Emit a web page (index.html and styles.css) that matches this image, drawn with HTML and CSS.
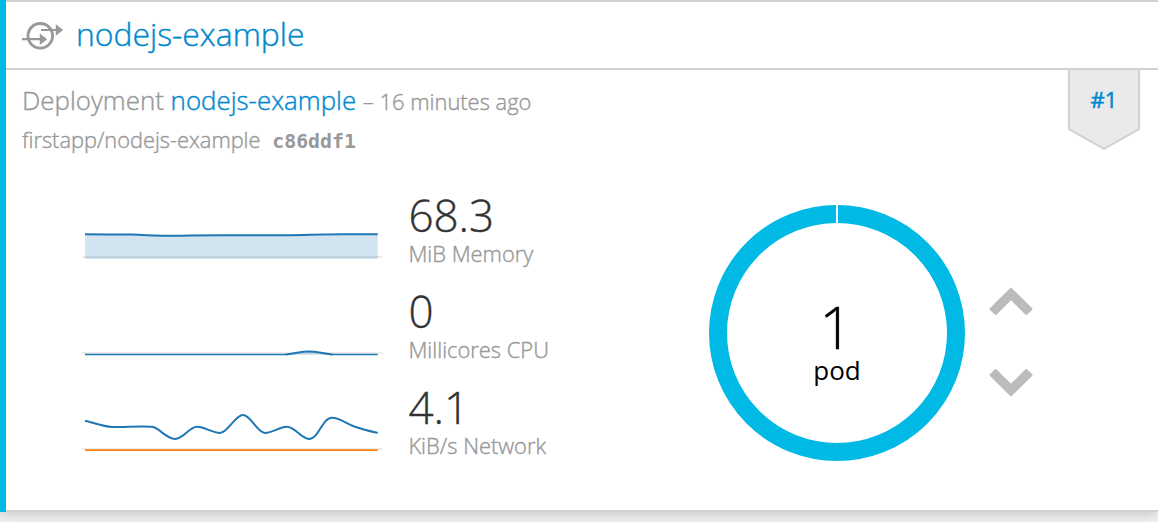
FILE: index.html
```html
<!DOCTYPE html>
<html lang="en">
<head>
<meta charset="utf-8">
<title>nodejs-example</title>
<link rel="stylesheet" href="styles.css">
</head>
<body>
<article class="card">
  <header class="card-header">
    <svg class="service-icon" width="42" height="30" viewBox="0 0 42 30">
      <circle class="icon-ring" cx="18.3" cy="14.8" r="12.3"/>
      <path class="icon-line" d="M0 18.2h19M19 9h17"/>
      <path class="icon-head" d="M17.8 12.4l7.4 5.8-7.4 5.8zM33.8 3.2l7.4 5.8-7.4 5.8z"/>
    </svg>
    <a class="title">nodejs-example</a>
  </header>
  <section class="card-body">
    <div class="details">
      <div class="deployment">
        <div class="deployment-name">Deployment <a>nodejs-example</a> <small>– 16 minutes ago</small></div>
        <div class="source">firstapp/nodejs-example <code>c86ddf1</code></div>
      </div>
      <div class="badge">
        <svg class="badge-shape" width="72" height="81" viewBox="0 0 72 81"><path d="M1 -2V59.2L36 78.8 71 59.2V-2z"/></svg>
        <a class="badge-label">#1</a>
      </div>
    </div>
    <div class="overview">
      <div class="metrics">
        <div class="metric">
          <svg class="spark" width="300" height="96" viewBox="0 0 300 96">
            <path class="area" d="M3 44.3L26 44.6 50 44.6C66 45 72 45.8 92 45.8 108 45.7 110 45.3 140 45.2H208C225 45 240 44.3 260 44.3H295.7V69H3z"/>
            <path class="axis" d="M0 67H300"/>
            <path class="line" d="M3 44.3L26 44.6 50 44.6C66 45 72 45.8 92 45.8 108 45.7 110 45.3 140 45.2H208C225 45 240 44.3 260 44.3H295.7"/>
          </svg>
          <div class="reading"><div class="value">68.3</div><div class="unit">MiB Memory</div></div>
        </div>
        <div class="metric">
          <svg class="spark" width="300" height="96" viewBox="0 0 300 96">
            <path class="axis" d="M0 67H300"/>
            <path class="area" d="M200 69C212 68 218 65.4 227 65.4S242 68 254 69z"/>
            <path class="line" d="M204 68.4C214 67.7 218 65.4 227 65.4S240 67.7 250 68.4"/>
            <path class="flat" d="M3 68.5H205M249 68.5H295.7"/>
          </svg>
          <div class="reading"><div class="value">0</div><div class="unit">Millicores CPU</div></div>
        </div>
        <div class="metric">
          <svg class="spark" width="300" height="96" viewBox="0 0 300 96">
            <path class="axis" d="M0 67H300"/>
            <path class="line" d="M3 38.8C12 40.8 21 44.5 30 45S62 43.5 70 44.8 84 56.9 93 56.9 107 44.8 115 44.8 130 50.9 138 50.9 153 32.9 161 32.9 175 50.9 183 50.9 197 44.8 205 44.8 219 56.9 227 56.9C237 56.9 240 35.8 250 35.8 258 35.8 265 42 273 44.8 280 47.5 287 49 295.7 50.9"/>
            <path class="flat sent" d="M3 68.1H295.7"/>
          </svg>
          <div class="reading"><div class="value">4.1</div><div class="unit">KiB/s Network</div></div>
        </div>
      </div>
      <div class="pods">
        <svg class="donut" width="256" height="256" viewBox="0 0 256 256">
          <circle class="ring" cx="128" cy="128" r="119"/>
          <path class="ring-gap" d="M128 0V19"/>
          <text class="pod-count" x="127" y="144">1</text>
          <text class="pod-label" x="128" y="175">pod</text>
        </svg>
        <div class="scaling">
          <svg width="44" height="29" viewBox="0 0 44 29"><path class="chevron" d="M21 1.2Q22 .3 23 1.2L43 21Q44 22 43 23L38.3 27.5Q37.3 28.4 36.3 27.5L22 13.3 7.7 27.5Q6.7 28.4 5.7 27.5L1 23Q0 22 1 21z"/></svg>
          <svg width="44" height="29" viewBox="0 0 44 29"><path class="chevron" d="M21 27.8Q22 28.7 23 27.8L43 8Q44 7 43 6L38.3 1.5Q37.3 .6 36.3 1.5L22 15.7 7.7 1.5Q6.7 .6 5.7 1.5L1 6Q0 7 1 8z"/></svg>
        </div>
      </div>
    </div>
  </section>
</article>
</body>
</html>
```
FILE: styles.css
```css
* { box-sizing: border-box; }
body {
  margin: 0;
  height: 522px;
  overflow: hidden;
  background: #f0f0f0;
  font-family: "Open Sans", sans-serif;
  font-weight: 300;
  color: #999;
  -webkit-text-stroke: .4px currentColor;
}
a { color: #0088ce; -webkit-text-stroke-color: #0088ce; }
.card {
  height: 512px;
  background: #fff;
  border: solid #d1d1d1;
  border-width: 2px 0;
  box-shadow: 0 2px 12px rgba(0, 0, 0, .18);
  position: relative;
}
.card::before {
  content: "";
  position: absolute;
  left: 0;
  top: -2px;
  width: 6px;
  height: 512px;
  background: #00b9e4;
}
.card-header {
  display: flex;
  align-items: center;
  gap: 12px;
  height: 68px;
  margin-left: 6px;
  padding: 2px 0 0 16px;
  border-bottom: 2px solid #d1d1d1;
}
.title {
  font-size: 31.9px;
  line-height: 60px;
  padding-bottom: 4px;
}
.icon-ring { fill: none; stroke: #999; stroke-width: 2.9; }
.icon-line { stroke: #999; stroke-width: 2.2; }
.icon-head { fill: #999; }
.details {
  display: flex;
  justify-content: space-between;
  height: 120px;
  padding: 0 18px 0 22px;
}
.deployment { padding-top: 10px; white-space: nowrap; }
.deployment-name { font-size: 25.9px; line-height: 40px; }
.deployment-name small { font-size: 21.9px; }
.source { font-size: 21.8px; line-height: 36px; }
.source code {
  font: 700 19.9px/1 "DejaVu Sans Mono", monospace;
  margin-left: 6px;
  -webkit-text-stroke: 0;
}
.badge { display: grid; width: 72px; height: 81px; }
.badge-shape, .badge-label { grid-area: 1 / 1; }
.badge-shape path { fill: #eaeaea; stroke: #d1d1d1; stroke-width: 2; }
.badge-label {
  font-size: 22px;
  font-weight: 400;
  line-height: 58px;
  text-align: center;
  -webkit-text-stroke-width: .5px;
}
.overview { display: flex; padding-left: 82px; }
.metrics { width: 627px; }
.metric { display: flex; gap: 26.4px; height: 96px; }
.axis { stroke: #000; stroke-opacity: .08; stroke-width: 2; }
.area { fill: #1f77b4; fill-opacity: .2; }
.line { fill: none; stroke: #1f77b4; stroke-width: 2; }
.flat { stroke: #1f77b4; stroke-width: 1.4; }
.sent { stroke: #ff7f0e; stroke-width: 1.8; }
.value { font-size: 44px; line-height: 48px; padding-top: 1px; color: #333; }
.unit { font-size: 21.9px; line-height: 30px; }
.pods { display: flex; align-items: center; gap: 23.5px; height: 256px; margin-top: 15px; }
.ring { fill: none; stroke: #00b9e4; stroke-width: 18; }
.ring-gap { stroke: #fff; stroke-width: 2; }
.donut text { fill: #000; text-anchor: middle; -webkit-text-stroke: 0; }
.donut .pod-count { font-size: 59px; stroke: #000; stroke-width: .4px; }
.pod-label { font-size: 26px; font-weight: 400; }
.scaling { display: flex; flex-direction: column; gap: 52.5px; padding-top: 17.5px; }
.scaling svg { display: block; }
.chevron { fill: #bbb; }
```
